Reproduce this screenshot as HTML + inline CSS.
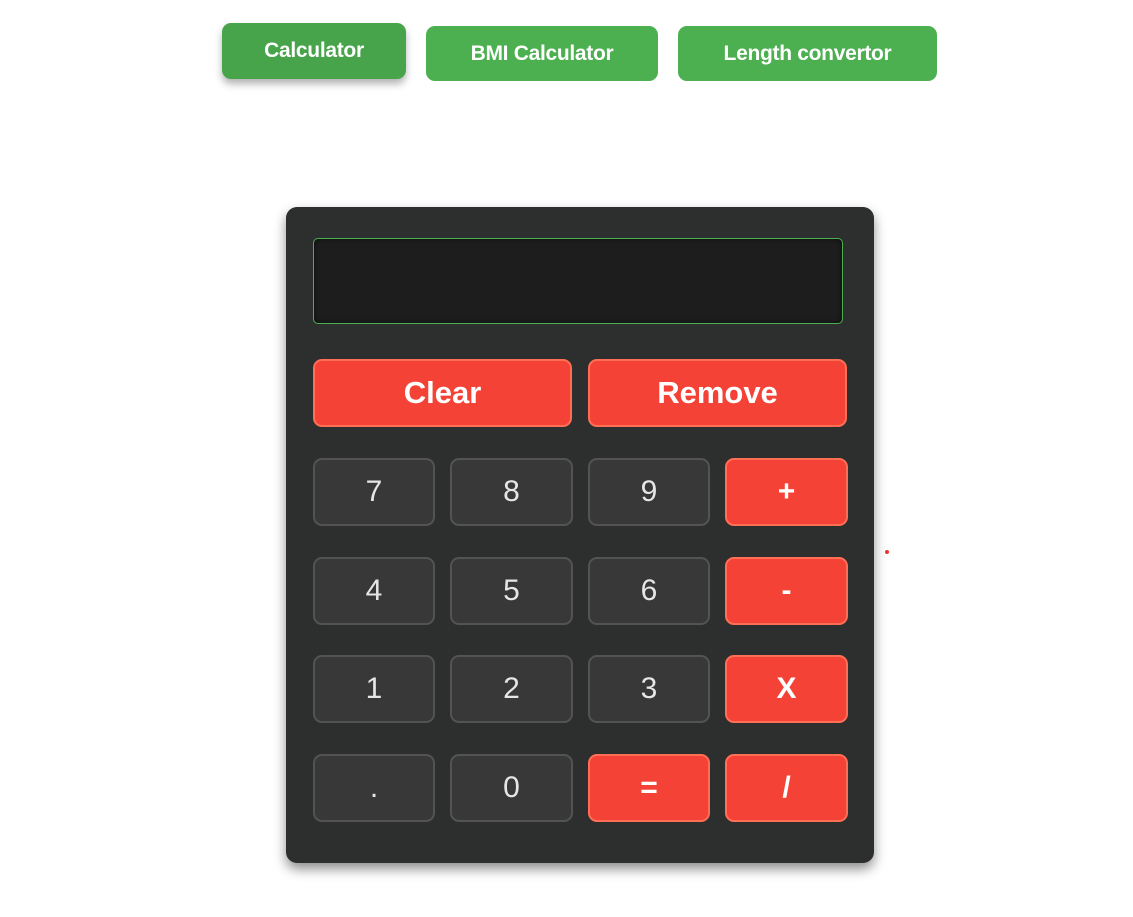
<!DOCTYPE html>
<html><head><style>
*{box-sizing:border-box;margin:0;padding:0}
body{width:1133px;height:917px;background:#fff;font-family:"Liberation Sans",Arial,sans-serif;position:relative;overflow:hidden}
.nav{position:absolute;background:#4caf50;color:#fff;font-weight:bold;font-size:21px;border-radius:9px;display:flex;align-items:center;justify-content:center;letter-spacing:-0.3px}
.calc{position:absolute;left:286px;top:207px;width:588px;height:656px;background:#2d2e2e;border-radius:11px;box-shadow:0 6px 12px rgba(0,0,0,.45)}
.disp{position:absolute;left:27px;top:31px;width:530px;height:86px;background:#1d1d1d;border:1px solid #4caf50;border-radius:5px;box-shadow:inset 0 0 6px rgba(0,0,0,.6)}
.b{position:absolute;border-radius:9px;display:flex;align-items:center;justify-content:center;font-size:30px}
.d{background:#383838;border:2px solid #535353;color:#e6e6e6}
.r{background:#f44336;border:2px solid #ff6e55;color:#fff;font-weight:bold}
</style></head><body>
<div class="nav" style="left:222px;top:23px;width:184px;height:56px;background:#47a44b;box-shadow:0 5px 8px rgba(0,0,0,.3)">Calculator</div>
<div class="nav" style="left:426px;top:26px;width:232px;height:55px">BMI Calculator</div>
<div class="nav" style="left:678px;top:26px;width:259px;height:55px">Length convertor</div>
<div class="calc">
<div class="disp"></div>
<div class="b r" style="left:27px;top:152px;width:259px;height:68px;font-size:31px">Clear</div>
<div class="b r" style="left:302px;top:152px;width:259px;height:68px;font-size:31px">Remove</div>
</div>
<div style="position:absolute;left:885px;top:550px;width:4px;height:4px;border-radius:50%;background:#e33"></div>
<div style="position:absolute;left:0;top:0">
<div class="b d" style="left:313px;top:458px;width:122px;height:68px">7</div>
<div class="b d" style="left:450px;top:458px;width:123px;height:68px">8</div>
<div class="b d" style="left:588px;top:458px;width:122px;height:68px">9</div>
<div class="b r" style="left:725px;top:458px;width:123px;height:68px">+</div>
<div class="b d" style="left:313px;top:557px;width:122px;height:68px">4</div>
<div class="b d" style="left:450px;top:557px;width:123px;height:68px">5</div>
<div class="b d" style="left:588px;top:557px;width:122px;height:68px">6</div>
<div class="b r" style="left:725px;top:557px;width:123px;height:68px">-</div>
<div class="b d" style="left:313px;top:655px;width:122px;height:68px">1</div>
<div class="b d" style="left:450px;top:655px;width:123px;height:68px">2</div>
<div class="b d" style="left:588px;top:655px;width:122px;height:68px">3</div>
<div class="b r" style="left:725px;top:655px;width:123px;height:68px">X</div>
<div class="b d" style="left:313px;top:754px;width:122px;height:68px">.</div>
<div class="b d" style="left:450px;top:754px;width:123px;height:68px">0</div>
<div class="b r" style="left:588px;top:754px;width:122px;height:68px">=</div>
<div class="b r" style="left:725px;top:754px;width:123px;height:68px">/</div>
</div>
</body></html>
